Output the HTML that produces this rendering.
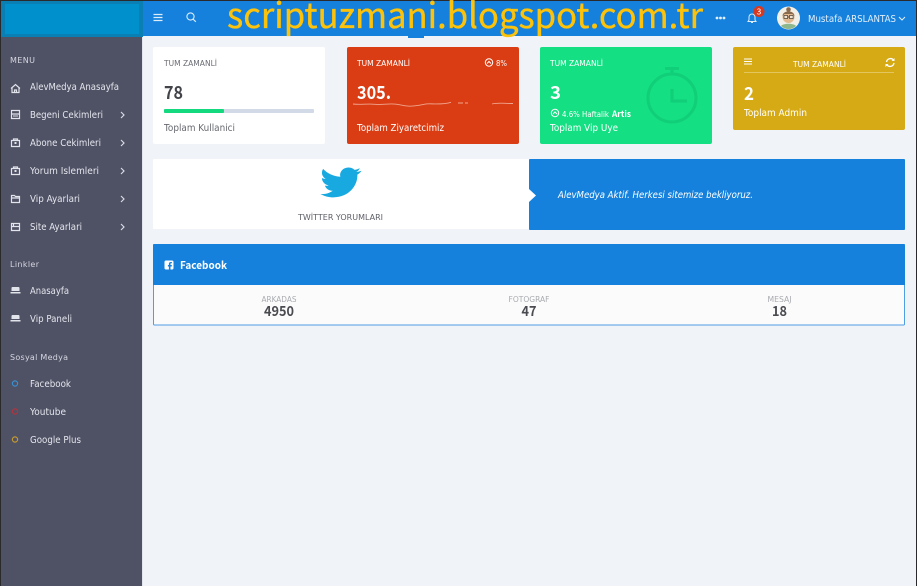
<!DOCTYPE html>
<html lang="tr"><head><meta charset="utf-8"><title>Panel</title>
<style>
html,body{margin:0;padding:0;width:917px;height:586px;overflow:hidden;background:#f0f3f8}
svg{display:block}
text{font-family:"Noto Sans CJK JP","Liberation Sans",sans-serif;white-space:pre}
.m{font-family:"DejaVu Sans",sans-serif;font-size:9.8px;fill:#e4e6ee}
.b{font-family:"DejaVu Sans",sans-serif;font-size:9.8px}
.h{font-family:"DejaVu Sans",sans-serif;font-size:8px;fill:#d5d7e2}
.t{font-family:"DejaVu Sans",sans-serif;font-size:8.3px}
.ic{fill:none;stroke:#e2e4ec;stroke-width:1.2}
.ch{fill:none;stroke:#d8dae4;stroke-width:1.2}
.w{fill:#fff}
</style></head><body>
<svg width="917" height="586" viewBox="0 0 917 586" xmlns="http://www.w3.org/2000/svg">
<rect width="917" height="586" fill="#f0f3f8"/>
<rect x="0" y="0" width="142" height="586" fill="#4f5164"/>
<rect x="142" y="0" width="1" height="586" fill="#e2e5ec"/>
<rect x="142" y="1" width="775" height="35" fill="#1581dc"/>
<rect x="408" y="36" width="16" height="2" fill="#1581dc"/>
<rect x="1" y="1" width="142" height="36" fill="#0a7fb3"/>
<rect x="5" y="4" width="134" height="30" fill="#0090cc"/>
<rect x="0" y="0" width="917" height="1" fill="#2a2a2c"/>
<rect x="0" y="0" width="1" height="586" fill="#2a2a2c"/>
<rect x="916" y="0" width="1" height="586" fill="#2a2a2c"/>

<!-- header -->
<path d="M153.500 14.500h9M153.500 17.500h9M153.500 20.500h9" stroke="#dcecf9" stroke-width="1.300" fill="none"/>
<circle cx="190.500" cy="16.500" r="3.600" fill="none" stroke="#dcecf9" stroke-width="1.100"/><path d="M193 19l2.800 2.800" stroke="#dcecf9" stroke-width="1.200"/>
<text x="227" y="28" font-size="35" fill="#fdc20a" stroke="#fdc20a" stroke-width=".35" textLength="476" lengthAdjust="spacingAndGlyphs">scriptuzmani.blogspot.com.tr</text>
<circle cx="717" cy="18" r="1.400" fill="#e4effa"/><circle cx="720.500" cy="18" r="1.400" fill="#e4effa"/><circle cx="724" cy="18" r="1.400" fill="#e4effa"/>
<path d="M748 21.500h8l-1-1.500v-3a3 3 0 0 0-6 0v3z" fill="none" stroke="#dcecf9" stroke-width="1"/><path d="M751 22.500h2" stroke="#dcecf9"/>
<circle cx="759" cy="11.500" r="5.500" fill="#d9381e"/><text x="759" y="14.500" text-anchor="middle" font-size="8.500" class="w">3</text>
<circle cx="788.500" cy="18" r="11.500" fill="#f2efe8"/>
<path d="M781 26c2-3 13-3 15 0a11 11 0 0 1-15 0z" fill="#8fb78d"/>
<circle cx="788.500" cy="17" r="6" fill="#e2b88e"/>
<path d="M782.500 16c0-6 12-6 12 0l-2-2h-8z" fill="#8a6a4e"/><circle cx="788.500" cy="9.500" r="2.300" fill="#8a6a4e"/>
<path d="M783.500 17h10" stroke="#4c3b2f" stroke-width="1"/><rect x="784" y="15.500" width="3.600" height="3" fill="#efe3d3" stroke="#4c3b2f" stroke-width=".7"/><rect x="789.500" y="15.500" width="3.600" height="3" fill="#efe3d3" stroke="#4c3b2f" stroke-width=".7"/>
<text class="b" x="808" y="22" fill="#e2effb" textLength="88" lengthAdjust="spacingAndGlyphs">Mustafa ARSLANTAS</text>
<path d="M899 17l3 3 3-3" fill="none" stroke="#e2effb" stroke-width="1"/>

<!-- sidebar -->
<text class="h" x="10" y="63" textLength="25">MENU</text>
<path class="ic" d="M11 88.500l4.500-4 4.500 4M12 88v4.500h7V88M14.500 92v-2h2v2"/>
<text class="m" x="30" y="90" textLength="89" lengthAdjust="spacingAndGlyphs">AlevMedya Anasayfa</text>
<path class="ic" d="M11.500 110.500h8v8h-8zM11.500 114h8"/><rect x="13" y="115.500" width="5" height="1" fill="#e2e4ec"/>
<text class="m" x="30" y="118" textLength="73" lengthAdjust="spacingAndGlyphs">Begeni Cekimleri</text>
<path class="ch" d="M121 112l3 3-3 3"/>
<path class="ic" d="M11.500 140.500h8v6h-8zM13.500 140.500v-1.500h4v1.500"/><rect x="14.500" y="142" width="2" height="2" fill="#e2e4ec"/>
<text class="m" x="30" y="146" textLength="71" lengthAdjust="spacingAndGlyphs">Abone Cekimleri</text>
<path class="ch" d="M121 140l3 3-3 3"/>
<path class="ic" d="M11.500 168.500h8v6h-8zM13.500 168.500v-1.500h4v1.500"/><rect x="14.500" y="170" width="2" height="2" fill="#e2e4ec"/>
<text class="m" x="30" y="174" textLength="69" lengthAdjust="spacingAndGlyphs">Yorum Islemleri</text>
<path class="ch" d="M121 168l3 3-3 3"/>
<path class="ic" d="M11.500 195.500h3l1 1h4v6h-8zM11.500 198h8"/>
<text class="m" x="30" y="202" textLength="50" lengthAdjust="spacingAndGlyphs">Vip Ayarlari</text>
<path class="ch" d="M121 196l3 3-3 3"/>
<path class="ic" d="M11.500 223.500h8v7h-8zM11.500 226.500h8M13.500 223.500v3"/>
<text class="m" x="30" y="230" textLength="52" lengthAdjust="spacingAndGlyphs">Site Ayarlari</text>
<path class="ch" d="M121 224l3 3-3 3"/>

<text class="h" x="10" y="267" textLength="29">Linkler</text>
<path d="M11.500 288a1 1 0 0 1 1-1h6a1 1 0 0 1 1 1v3h-8zM10.500 292h10v1.500h-10z" fill="#e2e4ec"/>
<text class="m" x="30" y="294" textLength="39" lengthAdjust="spacingAndGlyphs">Anasayfa</text>
<path d="M11.500 316a1 1 0 0 1 1-1h6a1 1 0 0 1 1 1v3h-8zM10.500 320h10v1.500h-10z" fill="#e2e4ec"/>
<text class="m" x="30" y="322" textLength="42" lengthAdjust="spacingAndGlyphs">Vip Paneli</text>

<text class="h" x="10" y="360" textLength="58">Sosyal Medya</text>
<circle cx="15" cy="383.500" r="2.600" fill="none" stroke="#3a8fd0" stroke-width="1.200"/>
<text class="m" x="30" y="387" textLength="41" lengthAdjust="spacingAndGlyphs">Facebook</text>
<circle cx="15" cy="411.500" r="2.600" fill="none" stroke="#b0353f" stroke-width="1.200"/>
<text class="m" x="30" y="415" textLength="36" lengthAdjust="spacingAndGlyphs">Youtube</text>
<circle cx="15" cy="439.500" r="2.600" fill="none" stroke="#c39a32" stroke-width="1.200"/>
<text class="m" x="30" y="443" textLength="51" lengthAdjust="spacingAndGlyphs">Google Plus</text>

<!-- card 1 -->
<rect x="153" y="47" width="172" height="97" rx="2" fill="#fff"/>
<text class="t" x="164" y="66" fill="#6a6c75" textLength="53" lengthAdjust="spacingAndGlyphs">TUM ZAMANLİ</text>
<text x="164" y="99" font-size="18" font-weight="700" fill="#43444a" textLength="19" lengthAdjust="spacingAndGlyphs">78</text>
<rect x="164" y="109" width="150" height="4" rx="1" fill="#d2dae8"/>
<rect x="164" y="109" width="60" height="4" rx="1" fill="#14d97f"/>
<text class="b" x="164" y="131" fill="#66686f" textLength="71" lengthAdjust="spacingAndGlyphs">Toplam Kullanici</text>

<!-- card 2 -->
<rect x="347" y="47" width="172" height="97" rx="2" fill="#da3d14"/>
<text class="t w" x="357" y="66" textLength="53" lengthAdjust="spacingAndGlyphs">TUM ZAMANLİ</text>
<circle cx="489" cy="62.500" r="3.700" fill="none" stroke="#fff" stroke-width="1"/><path d="M487 63.500l2-2 2 2" fill="none" stroke="#fff"/>
<text class="t w" x="496" y="66" textLength="11" lengthAdjust="spacingAndGlyphs">8%</text>
<text x="357" y="99" font-size="18" font-weight="700" class="w" textLength="34" lengthAdjust="spacingAndGlyphs">305.</text>
<path d="M353 104c8 1 14-.5 22 .3s14-1.300 22 0 10 2.500 18 1.500 10-2 14-2 14 1 22-1.500M458 103h5M465 103h3M492 104c5-1.500 12-.5 21-.5" fill="none" stroke="#f0a58e" stroke-width=".9"/>
<text class="b w" x="357" y="131" textLength="87" lengthAdjust="spacingAndGlyphs">Toplam Ziyaretcimiz</text>

<!-- card 3 -->
<rect x="540" y="47" width="172" height="97" rx="2" fill="#14df82"/>
<text class="t w" x="550" y="66" textLength="53" lengthAdjust="spacingAndGlyphs">TUM ZAMANLİ</text>
<g fill="none" stroke="#11ce78" stroke-width="3"><circle cx="672" cy="98" r="24"/><path d="M672 89v12h15"/><path d="M672 73v-4M665 68.500h14"/></g>
<text x="550" y="99" font-size="18" font-weight="700" class="w" textLength="11" lengthAdjust="spacingAndGlyphs">3</text>
<circle cx="555" cy="113" r="3.700" fill="none" stroke="#fff" stroke-width="1"/><path d="M553 114l2-2 2 2" fill="none" stroke="#fff"/>
<text class="t w" x="562" y="117" textLength="47" lengthAdjust="spacingAndGlyphs">4.6% Haftalik</text>
<text x="612" y="117" font-size="8.500" font-weight="700" class="w" textLength="19" lengthAdjust="spacingAndGlyphs">Artis</text>
<text class="b w" x="550" y="131" textLength="68" lengthAdjust="spacingAndGlyphs">Toplam Vip Uye</text>

<!-- card 4 -->
<rect x="733" y="47" width="172" height="83" rx="2" fill="#d6aa14"/>
<path d="M744 59h8M744 61.500h8M744 64h8" stroke="#fff" stroke-width="1.100"/>
<text class="t w" x="793" y="67" textLength="53" lengthAdjust="spacingAndGlyphs">TUM ZAMANLİ</text>
<path d="M886.500 62a4 4 0 0 1 7-2M894 63a4 4 0 0 1-7 2" fill="none" stroke="#fff" stroke-width="1.300"/><path d="M894.500 58v3h-3zM885.500 67v-3h3z" fill="#fff"/>
<rect x="744" y="72" width="150" height="1" fill="#e4c65e"/>
<text x="744" y="100" font-size="18" font-weight="700" class="w" textLength="10" lengthAdjust="spacingAndGlyphs">2</text>
<text class="b w" x="744" y="116" textLength="63" lengthAdjust="spacingAndGlyphs">Toplam Admin</text>

<!-- twitter panel -->
<rect x="153" y="159" width="376" height="70" rx="1" fill="#fff"/>
<path transform="translate(361 165) scale(1.18 1.06) translate(-361 -165)" d="M361 170.500c-1.300.6-2.700 1-4 1.100 1.400-.9 2.500-2.200 3-3.700-1.400.8-2.800 1.400-4.400 1.700a7.100 7.100 0 0 0-12.100 6.500c-5.900-.3-11.100-3.100-14.600-7.400-1.900 3.200-1 7.400 2.200 9.500-1.200 0-2.300-.4-3.200-.9 0 3.400 2.400 6.300 5.700 7-1 .3-2.100.3-3.200.1.900 2.800 3.500 4.900 6.700 4.900-3 2.400-6.900 3.500-10.600 3 3.200 2 7 3.200 11 3.200 13.300 0 20.900-11.300 20.400-21.400 1.400-1 2.600-2.200 3.500-3.600z" fill="#17a9df"/>
<text class="t" x="298" y="220" fill="#5d5f67" textLength="85" lengthAdjust="spacingAndGlyphs">TWİTTER YORUMLARI</text>
<rect x="529" y="159" width="376" height="71" rx="1" fill="#1581dc"/>
<path d="M529 189l7 6.500-7 6.500z" fill="#fff"/>
<text class="b w" x="558" y="198" font-style="italic" textLength="195" lengthAdjust="spacingAndGlyphs">AlevMedya Aktif. Herkesi sitemize bekliyoruz.</text>

<!-- facebook panel -->
<rect x="153.500" y="244.500" width="751" height="80.500" rx="1" fill="#fbfbfb" stroke="#4f9ee4"/>
<path d="M153 285v-40a1 1 0 0 1 1-1h750a1 1 0 0 1 1 1v40z" fill="#1581dc"/>
<rect x="164.500" y="260.500" width="9" height="9" rx="1.500" fill="#fff"/>
<path d="M170.500 270v-3.500h1.300v-1.500h-1.300v-1c0-.5.300-.7.800-.7h.6v-1.300h-1c-1.300 0-2 .7-2 1.800v1.200h-1v1.500h1v3.500z" fill="#1581dc"/>
<text x="180" y="269" font-size="10.500" font-weight="700" class="w" textLength="47" lengthAdjust="spacingAndGlyphs">Facebook</text>
<text class="t" x="279" y="302" text-anchor="middle" fill="#a9abb0" textLength="35" lengthAdjust="spacingAndGlyphs">ARKADAS</text>
<text x="279" y="316" text-anchor="middle" font-size="14" font-weight="700" fill="#4a4b50" textLength="30" lengthAdjust="spacingAndGlyphs">4950</text>
<text class="t" x="529" y="302" text-anchor="middle" fill="#a9abb0" textLength="41" lengthAdjust="spacingAndGlyphs">FOTOGRAF</text>
<text x="529" y="316" text-anchor="middle" font-size="14" font-weight="700" fill="#4a4b50" textLength="15" lengthAdjust="spacingAndGlyphs">47</text>
<text class="t" x="779.500" y="302" text-anchor="middle" fill="#a9abb0" textLength="24" lengthAdjust="spacingAndGlyphs">MESAJ</text>
<text x="779.500" y="316" text-anchor="middle" font-size="14" font-weight="700" fill="#4a4b50" textLength="15" lengthAdjust="spacingAndGlyphs">18</text>
</svg>
</body></html>
